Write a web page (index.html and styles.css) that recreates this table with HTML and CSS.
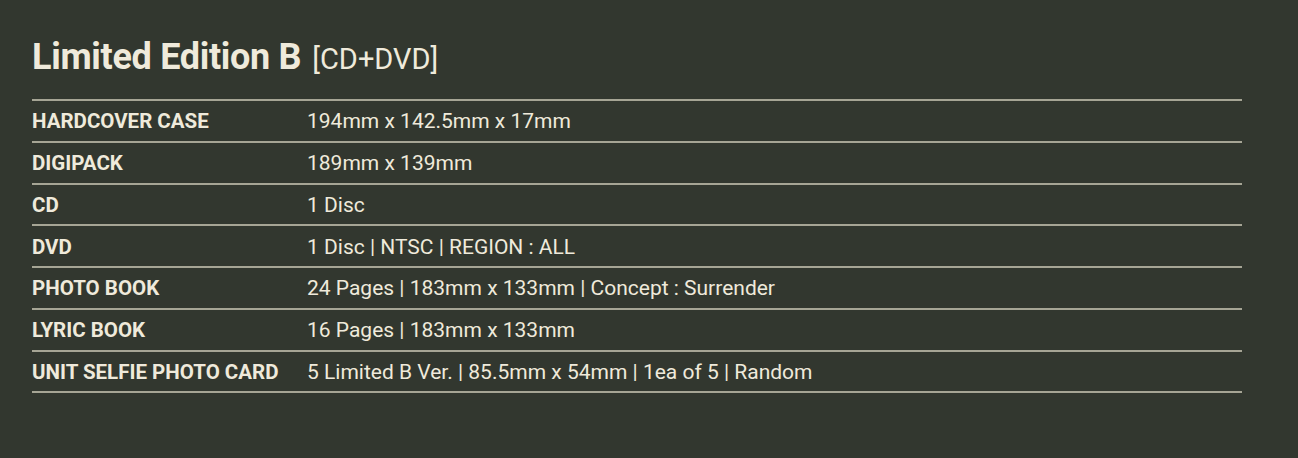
FILE: index.html
```html
<!DOCTYPE html>
<html>
<head>
<meta charset="UTF-8">
<title>Limited Edition B</title>
<link rel="stylesheet" href="styles.css">
</head>
<body>
<div class="spec">
    <h2 class="spec-title">Limited Edition B<span class="spec-sub">[CD+DVD]</span></h2>
    <table class="spec-table">
        <tr><th>HARDCOVER CASE</th><td>194mm x 142.5mm x 17mm</td></tr>
        <tr><th>DIGIPACK</th><td>189mm x 139mm</td></tr>
        <tr><th>CD</th><td>1 Disc</td></tr>
        <tr><th>DVD</th><td>1 Disc | NTSC | REGION : ALL</td></tr>
        <tr><th>PHOTO BOOK</th><td>24 Pages | 183mm x 133mm | Concept : Surrender</td></tr>
        <tr><th>LYRIC BOOK</th><td>16 Pages | 183mm x 133mm</td></tr>
        <tr><th>UNIT SELFIE PHOTO CARD</th><td>5 Limited B Ver. | 85.5mm x 54mm | 1ea of 5 | Random</td></tr>
    </table>
</div>
</body>
</html>
```

FILE: styles.css
```css
html, body {
    margin: 0; padding: 0;
    width: 100%; height: 100%;
    background: #32372f; color: #efeadb;
    font-family: "Roboto", "Liberation Sans", sans-serif;
}

.spec { padding: 34px 56px 0 32px; }

.spec-title {
    margin: 0; height: 65px;
    font-size: 36px; font-weight: 700; line-height: 46px;
    letter-spacing: -0.3px;
}
    .spec-sub { font-size: 29px; font-weight: 400; margin-left: 11px; letter-spacing: 0; }

.spec-table {
    width: 1210px; border-collapse: collapse;
    border-top: 2px solid #a6a595;
}
    .spec-table tr { border-bottom: 2px solid #a6a595; height: 41.75px; }
    .spec-table th {
        width: 275px; padding: 1px 0 0 0; text-align: left;
        font-size: 20.5px; font-weight: 700;
    }
    .spec-table td { padding: 1px 0 0 0; font-size: 21px; font-weight: 400; }
```
